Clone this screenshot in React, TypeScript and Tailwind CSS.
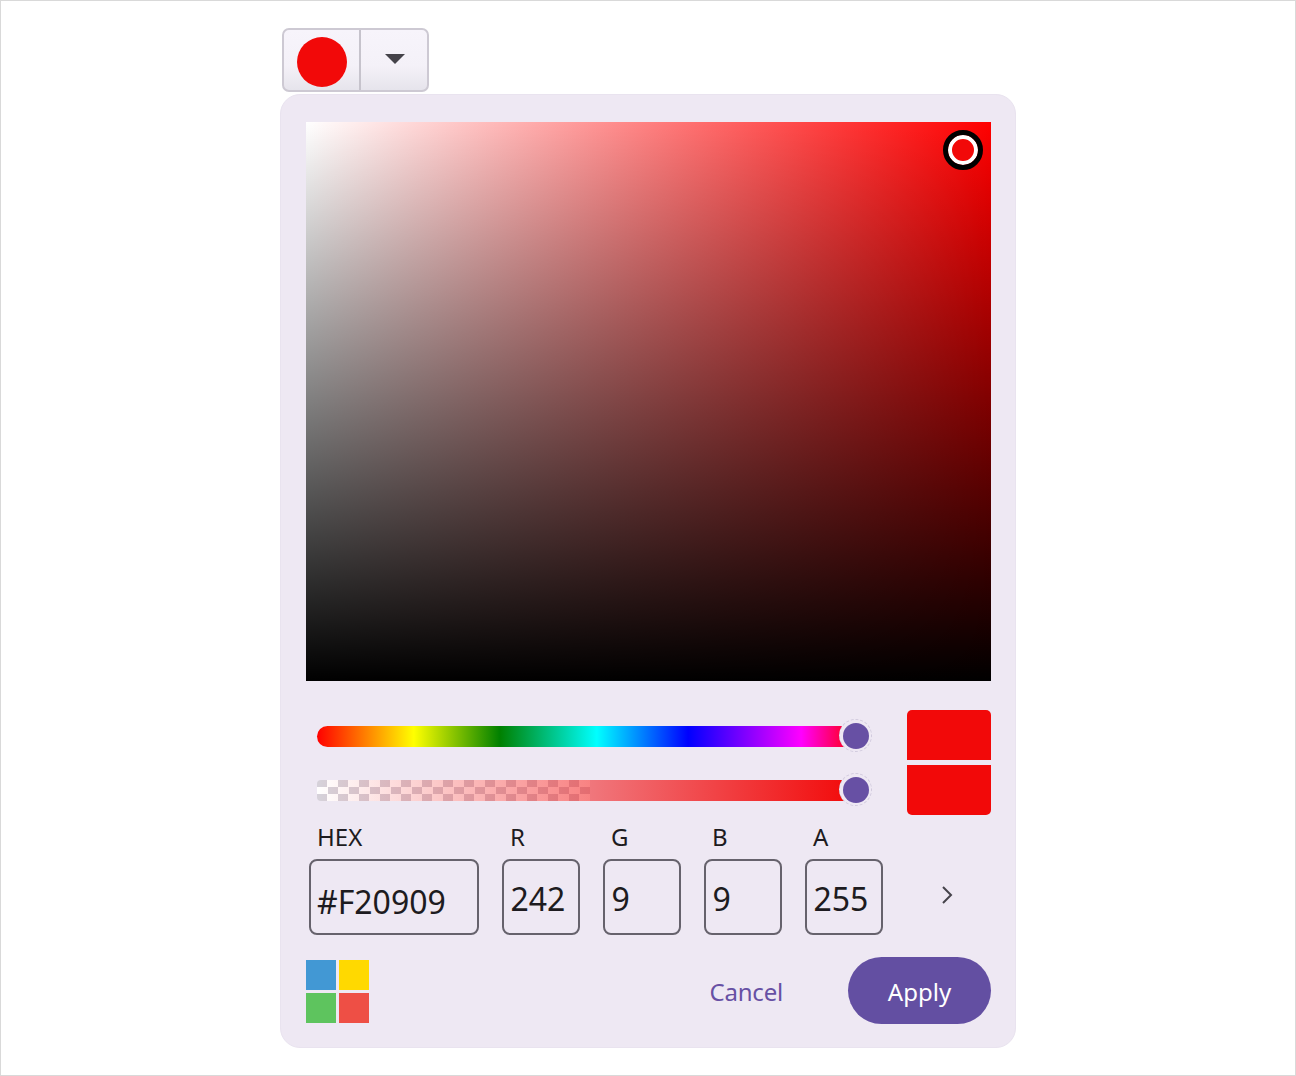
const font = "font-['Noto_Sans','Open_Sans',sans-serif]";

function Thumb() {
    return (
        <span className="absolute right-[-17px] top-[-7px] flex h-[33px] w-[33px] items-center justify-center rounded-full border border-dashed border-[#d2cbde] bg-[#eee8f3]">
            <span className="h-[26px] w-[26px] rounded-full bg-[#6750a4]" />
        </span>
    );
}

function Field({ label, value, wide }: { label: string; value: string; wide?: boolean }) {
    return (
        <div className="flex flex-col">
            <div className="h-[33px] pl-[8px] text-[24px] leading-[32px] text-[#1d1b20]">{label}</div>
            <div
                className={`mt-[5px] flex h-[76px] items-center rounded-[8px] border-2 border-[#66626c] text-[32px] text-[#1d1b20] ${
                    wide ? "w-[170px] pl-[6px] pt-[9px]" : "w-[78px] pl-[6.5px] pt-[3px]"
                }`}
            >
                {value}
            </div>
        </div>
    );
}

export default function App() {
    return (
        <div className={`h-[1076px] border border-[#d9d9d9] bg-white pl-[279px] pt-[27px] ${font}`}>
            {/* trigger */}
            <div className="ml-[2px] flex h-[64px] w-[147px] overflow-hidden rounded-[7px] border-2 border-[#cdc9d3] bg-[linear-gradient(to_bottom,#f7f4fb,#f4f1f8_60%,#e6e4ec)]">
                <div className="flex w-[77px] items-center justify-center border-r-2 border-[#c6c3cc] pl-[1px] pt-[3px]">
                    <span className="h-[50px] w-[50px] rounded-full bg-[#f20909]" />
                </div>
                <div className="flex flex-1 items-center justify-center pb-[2px] pl-[2px]">
                    <svg width="20" height="10" viewBox="0 0 20 10">
                        <path d="M0 0h20L10 10z" fill="#45434a" />
                    </svg>
                </div>
            </div>

            {/* panel */}
            <div className="mt-[2px] h-[954px] w-[736px] rounded-[20px] border border-[#e9e3ef] bg-[#eee8f3] pl-[25px] pr-[24px] pt-[27px]">
                <div className="relative h-[559px] w-[685px] bg-[linear-gradient(to_top,#000,transparent),linear-gradient(to_right,#fff,#f00)]">
                    <span className="absolute left-[637px] top-[8px] h-[40px] w-[40px] rounded-full border-[5px] border-black bg-[#f20909] shadow-[inset_0_0_0_4px_#fff]" />
                </div>

                <div className="mt-[29px] flex h-[105px]">
                    <div className="ml-[11px] w-[538px] pt-[16px]">
                        <div className="relative h-[21px] rounded-l-full bg-[linear-gradient(to_right,#f00,#ff0_18%,#008000_34%,#0ff_52%,#00f_69%,#f0f_90%,#f00)]">
                            <Thumb />
                        </div>
                        <div className="relative mt-[33px] h-[21px]">
                            <div className="absolute inset-y-0 left-0 w-[273px] rounded-l-[4px] bg-[repeating-conic-gradient(#fff_0_25%,#d6d2da_0_50%)] bg-[length:21px_14px]" />
                            <div className="absolute inset-0 rounded-l-[4px] bg-[linear-gradient(to_right,rgba(242,9,9,0),#f20909)]" />
                            <Thumb />
                        </div>
                    </div>
                    <div className="ml-[52px] flex w-[84px] flex-col gap-[5px]">
                        <div className="h-[50px] rounded-t-[5px] bg-[#f20909]" />
                        <div className="h-[50px] rounded-b-[5px] bg-[#f20909]" />
                    </div>
                </div>

                <div className="ml-[3px] mt-[6px] flex gap-[23px]">
                    <Field label="HEX" value="#F20909" wide />
                    <Field label="R" value="242" />
                    <Field label="G" value="9" />
                    <Field label="B" value="9" />
                    <Field label="A" value="255" />
                    <div className="ml-[35px] flex items-center pt-[33px]">
                        <svg width="12" height="18" viewBox="0 0 12 18" fill="none" stroke="#45434a" strokeWidth="2">
                            <path d="M2 1l8 8-8 8" />
                        </svg>
                    </div>
                </div>

                <div className="mt-[22px] flex h-[67px] items-center">
                    <div className="mt-[2px] grid grid-cols-[30px_30px] grid-rows-[30px_30px] gap-[3px]">
                        <span className="bg-[#4298d4]" />
                        <span className="bg-[#ffd900]" />
                        <span className="bg-[#5ec45e]" />
                        <span className="bg-[#ee4f45]" />
                    </div>
                    <span className="ml-auto pt-[2px] text-[24px] tracking-[-0.2px] text-[#6750a4]">Cancel</span>
                    <div className="ml-[65px] flex h-[67px] w-[143px] items-center justify-center rounded-full bg-[#634fa2] pt-[2px] text-[24px] text-white">
                        Apply
                    </div>
                </div>
            </div>
        </div>
    );
}
